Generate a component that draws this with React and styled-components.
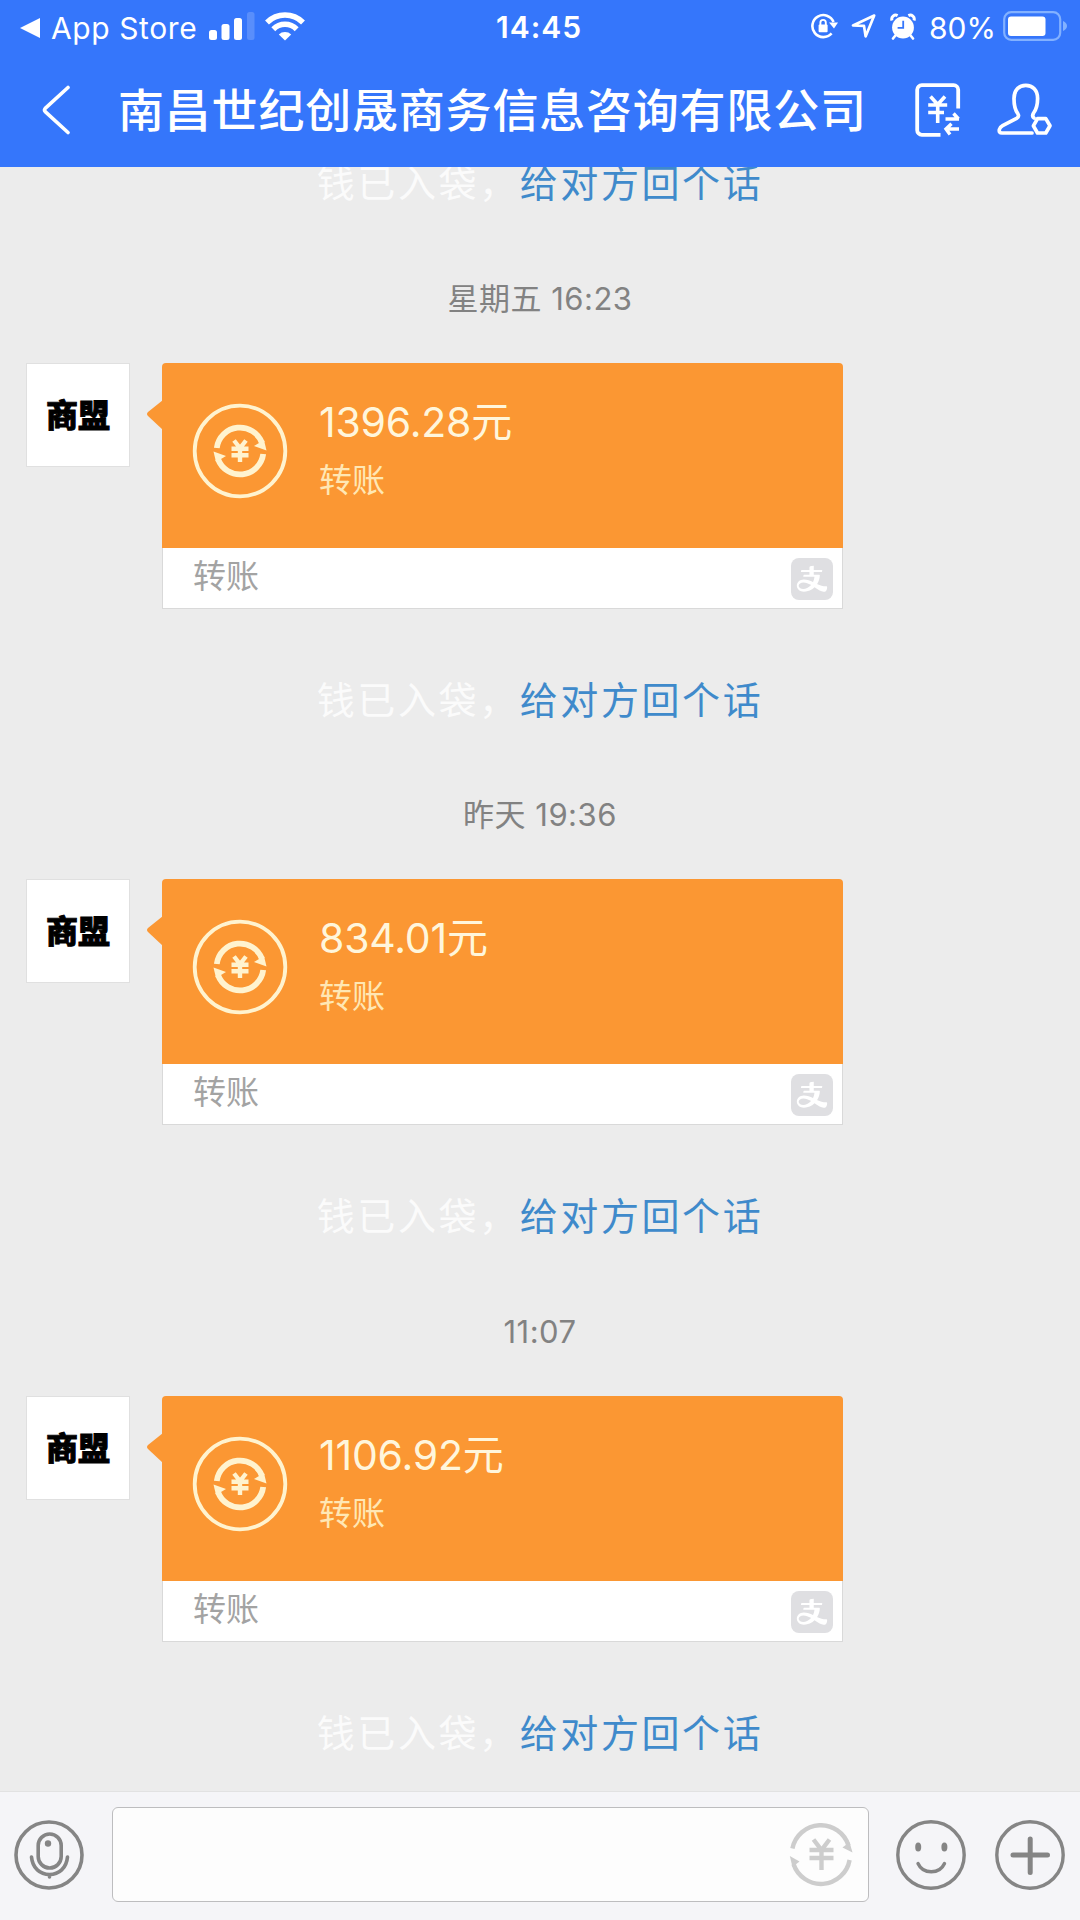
import React from 'react';
import styled, { createGlobalStyle } from 'styled-components';
import { AiFillAlipaySquare } from 'react-icons/ai';

const messages = [
  { id: 1, time: '星期五 16:23', amount: '1396.28元' },
  { id: 2, time: '昨天 19:36', amount: '834.01元' },
  { id: 3, time: '11:07', amount: '1106.92元' },
];

const SignalIcon = () => (
  <svg width="46" height="30" viewBox="0 0 46 30" fill="#fff">
    <rect x="0" y="19" width="8" height="10" rx="2.5" />
    <rect x="12.5" y="13" width="8" height="16" rx="2.5" />
    <rect x="25" y="7" width="8" height="22" rx="2.5" />
    <rect x="38" y="1" width="7.5" height="28" rx="2.5" opacity="0.18" />
  </svg>
);

const WifiIcon = () => (
  <svg width="40" height="30" viewBox="0 0 40 30" fill="none" stroke="#fff" strokeWidth="5.5">
    <path d="M2 11.5 A25.5 25.5 0 0 1 38 11.5" />
    <path d="M8.3 18.2 A16.5 16.5 0 0 1 31.7 18.2" />
    <path d="M13.8 23.4 A9 9 0 0 1 26.2 23.4 L20 29.5 Z" fill="#fff" stroke="none" />
  </svg>
);

const RotationLockIcon = () => (
  <svg width="28" height="26" viewBox="0 0 28 26" fill="none" stroke="#fff" strokeWidth="2.6">
    <path d="M23.6 9 A11 11 0 1 0 21.6 20.4" />
    <path d="M19 9.6 H28 L24 15.5 Z" fill="#fff" stroke="none" />
    <rect x="8.6" y="11.6" width="9" height="7.6" rx="1" fill="#fff" stroke="none" />
    <path d="M10.4 12 V9.6 A2.7 2.7 0 0 1 15.8 9.6 V12" strokeWidth="1.9" />
  </svg>
);

const LocationIcon = () => (
  <svg width="26" height="26" viewBox="0 0 26 26" fill="none" stroke="#fff" strokeWidth="2.7" strokeLinejoin="round">
    <path d="M23.2 2.6 L2 12.4 L13 12.9 L14.6 23.4 Z" />
  </svg>
);

const AlarmIcon = () => (
  <svg width="26" height="27" viewBox="0 0 26 27" fill="none">
    <circle cx="13" cy="14.5" r="10.9" fill="#fff" />
    <path d="M2 7.5 A4 4 0 0 1 7.6 2.6 M18.4 2.6 A4 4 0 0 1 24 7.5" stroke="#fff" strokeWidth="3" />
    <path d="M5.4 22.5 L3 25.5 M20.6 22.5 L23 25.5" stroke="#fff" strokeWidth="2.6" strokeLinecap="round" />
    <path d="M13.2 7.8 V14.8 H7.6" stroke="#3576fb" strokeWidth="1.8" />
  </svg>
);

const BatteryIcon = () => (
  <svg width="65" height="30" viewBox="0 0 65 30">
    <rect x="1.2" y="1.2" width="56" height="27.6" rx="7" fill="none" stroke="#82b1ff" strokeWidth="2.2" />
    <rect x="5" y="5.5" width="37.5" height="19.5" rx="3" fill="#fff" />
    <path d="M60 10 Q64 12 64 15 Q64 18 60 20 Z" fill="#82b1ff" />
  </svg>
);

const BackIcon = () => (
  <svg width="30" height="50" viewBox="0 0 30 50" fill="none" stroke="#fff" strokeWidth="3.6" strokeLinecap="round" strokeLinejoin="round">
    <path d="M26 2.5 L3.2 23.4 Q1.8 25 3.2 26.6 L26 47.5" />
  </svg>
);

const BillIcon = () => (
  <svg width="46" height="54" viewBox="0 0 46 54" fill="none" stroke="#fff" strokeWidth="3.8">
    <path d="M43.2 25.5 V6.8 A4.6 4.6 0 0 0 38.6 2.2 H6.8 A4.6 4.6 0 0 0 2.2 6.8 V47.2 A4.6 4.6 0 0 0 6.8 51.8 H25.5" />
    <path d="M15.5 13.5 L22.7 21.5 L30 13.5 M13.2 22 H32.2 M13.2 29.5 H29 M22.7 21.5 V40" strokeWidth="3.6" />
    <path d="M30.5 36 H44 M38.5 30.5 L43.5 36 M44 46 H31 M36.5 40.8 L31 46 L35 51.5" strokeWidth="3.4" />
  </svg>
);

const ProfileIcon = () => (
  <svg width="56" height="54" viewBox="0 0 56 54" fill="none" stroke="#fff" strokeWidth="3.7" strokeLinejoin="round">
    <path d="M35 50 H5 Q1.6 50 2.4 46.4 Q3 44 5.6 42.6 L19.6 35.4 Q22.6 33.6 20.8 30.6 C18 27 17 22 17 15.5 C17 7.2 22 2.4 28.8 2.4 C35.6 2.4 40.6 7.2 40.6 15.5 C40.6 22 39.6 26 36.6 30 Q34.6 33.4 37 35" strokeLinecap="round" />
    <path d="M41.5 36.2 H49.8 L54 43.4 L49.8 50.6 H41.5 L37.4 43.4 Z" transform="translate(-1 -0.6)" />
  </svg>
);

const TransferIcon = () => (
  <svg width="96" height="96" viewBox="0 0 96 96" fill="none" stroke="#fff3cf">
    <circle cx="48" cy="48" r="45.3" strokeWidth="3.8" />
    <path d="M24.8 45 A23.4 23.4 0 0 1 70 40" strokeWidth="5.8" />
    <path d="M62 43 L72 37 L74.5 47.5 Z" fill="#fff3cf" stroke="none" />
    <path d="M71.2 51 A23.4 23.4 0 0 1 26 56" strokeWidth="5.8" />
    <path d="M34 53 L24 59 L21.5 48.5 Z" fill="#fff3cf" stroke="none" />
    <path d="M42 37.5 L48 45 L54 37.5 M39.5 45.8 H56.5 M39.5 52.3 H56.5 M48 45 V59" strokeWidth="4.4" />
  </svg>
);

const InputYenIcon = () => (
  <svg width="64" height="64" viewBox="0 0 64 64" fill="none" stroke="#cdcdcd">
    <path d="M3.4 25.5 A29 29 0 0 1 59.5 22.5" strokeWidth="4.4" />
    <path d="M53.5 24.5 L60.5 19 L63.5 29.5 Z" fill="#cdcdcd" stroke="none" />
    <path d="M60.6 37 A29 29 0 0 1 4.5 41" strokeWidth="4.4" />
    <path d="M10.5 38.5 L3.5 44 L0.8 33 Z" fill="#cdcdcd" stroke="none" />
    <path d="M24.5 16.5 L32.5 27 L40.5 16.5 M20.5 27 H44.5 M20.5 35 H44.5 M32.5 27 V47" strokeWidth="4.4" />
  </svg>
);

const MicIcon = () => (
  <svg width="72" height="72" viewBox="0 0 72 72" fill="none" stroke="#858585" strokeWidth="3.6" strokeLinecap="round">
    <circle cx="36" cy="36" r="33" />
    <rect x="25.2" y="15" width="23" height="34" rx="11.5" />
    <path d="M18.5 38 C19.5 49 27 55.5 36.5 55.5 C46 55.5 53.5 49 54.5 38 M36.5 55.5 V58" />
    <circle cx="35" cy="24.5" r="3.2" fill="#858585" stroke="none" />
  </svg>
);

const SmileIcon = () => (
  <svg width="72" height="72" viewBox="0 0 72 72" fill="none" stroke="#858585" strokeWidth="3.4" strokeLinecap="round">
    <circle cx="36" cy="36" r="33.2" />
    <ellipse cx="23.2" cy="28" rx="3" ry="4.6" fill="#858585" stroke="none" />
    <ellipse cx="49.4" cy="28" rx="3" ry="4.6" fill="#858585" stroke="none" />
    <path d="M23 44.5 C28 55.5 44.5 55.5 49.5 44.5" />
  </svg>
);

const PlusIcon = () => (
  <svg width="72" height="72" viewBox="0 0 72 72" fill="none" stroke="#858585" strokeWidth="3.4" strokeLinecap="round">
    <circle cx="36" cy="36" r="33.2" />
    <path d="M19 36 H53.5 M36.2 20 V53.5" strokeWidth="5" />
  </svg>
);

const Tip = () => (
  <TipLine>
    钱已入袋，<TipLink>给对方回个话</TipLink>
  </TipLine>
);

const Message = ({ time, amount }) => (
  <>
    <Time>{time}</Time>
    <MessageRow>
      <Avatar>商盟</Avatar>
      <Card>
        <CardTop>
          <Tail width="17" height="30" viewBox="0 0 17 30">
            <path d="M17 0 L2 12 Q0 14 2 16 L17 30 Z" fill="#fb9733" />
          </Tail>
          <TransferIcon />
          <CardText>
            <Amount>{amount}</Amount>
            <Kind>转账</Kind>
          </CardText>
        </CardTop>
        <CardFooter>
          <span>转账</span>
          <PayLogo>
            <AiFillAlipaySquare size={54} color="#dfdfe2" />
          </PayLogo>
        </CardFooter>
      </Card>
    </MessageRow>
    <Tip />
  </>
);

const App = () => {
  return (
    <Screen>
      <GlobalStyle />
      <Header>
        <StatusBar>
          <StatusLeft>
            <BackTriangle />
            <StatusText>App Store</StatusText>
            <SignalIcon />
            <WifiIcon />
          </StatusLeft>
          <Clock>14:45</Clock>
          <StatusRight>
            <RotationLockIcon />
            <LocationIcon />
            <AlarmIcon />
            <Percent>80%</Percent>
            <BatteryIcon />
          </StatusRight>
        </StatusBar>
        <NavBar>
          <BackIcon />
          <Title>南昌世纪创晟商务信息咨询有限公司</Title>
          <BillIcon />
          <ProfileIcon />
        </NavBar>
      </Header>
      <MessageList>
        <Tip />
        {messages.map((m) => (
          <Message key={m.id} time={m.time} amount={m.amount} />
        ))}
      </MessageList>
      <InputBar>
        <MicIcon />
        <InputBox>
          <InputYenIcon />
        </InputBox>
        <SmileIcon />
        <PlusIcon />
      </InputBar>
    </Screen>
  );
};

export default App;

const GlobalStyle = createGlobalStyle`
  * {
    box-sizing: border-box;
  }
  body {
    margin: 0;
    font-family: Inter, 'Noto Sans CJK SC', sans-serif;
  }
  svg {
    display: block;
    flex-shrink: 0;
  }
`;

const Screen = styled.div`
  width: 1080px;
  height: 1920px;
  display: flex;
  flex-direction: column;
  overflow: hidden;
  background: #ececec;
`;

const Header = styled.header`
  height: 167px;
  flex-shrink: 0;
  background: #3576fb;
  color: #fff;
`;

const StatusBar = styled.div`
  height: 55px;
  padding: 0 12px 0 20px;
  display: grid;
  grid-template-columns: 476px 86px 1fr;
`;

const StatusLeft = styled.div`
  height: 52px;
  display: flex;
  align-items: center;

  svg + svg {
    margin-left: 10px;
  }
`;

const BackTriangle = styled.span`
  border: 10px solid transparent;
  border-left: 0;
  border-right: 20px solid #fff;
  margin-top: 3px;
`;

const StatusText = styled.span`
  padding-left: 11px;
  margin-top: 3px;
  font-size: 30px;
  letter-spacing: 0.6px;
  white-space: nowrap;
  flex: 0 0 169px;
`;

const Clock = styled.div`
  font-size: 30px;
  font-weight: 600;
  line-height: 55px;
  letter-spacing: 1px;
`;

const StatusRight = styled.div`
  height: 52px;
  display: flex;
  align-items: center;
  justify-content: flex-end;
  gap: 13px;
`;

const Percent = styled.span`
  width: 69px;
  margin-top: 3px;
  margin-right: -8px;
  font-size: 30px;
  white-space: nowrap;
`;

const NavBar = styled.div`
  height: 110px;
  padding: 0 0 0 42px;
  display: flex;
  align-items: center;
`;

const Title = styled.h1`
  width: 843px;
  margin: 0;
  padding-left: 46px;
  font-size: 46px;
  font-weight: 500;
  letter-spacing: 0.8px;
  line-height: 60px;
  white-space: nowrap;
  flex-shrink: 0;

  & + svg {
    margin-right: 36px;
  }
`;

const MessageList = styled.main`
  flex: 1;
  min-height: 0;
  padding-bottom: 28px;
  display: flex;
  flex-direction: column;
  justify-content: flex-end;
  overflow: hidden;
`;

const TipLine = styled.p`
  margin: 0;
  flex-shrink: 0;
  font-size: 38px;
  line-height: 60px;
  letter-spacing: 2.6px;
  text-align: center;
  color: #fbfbfb;
`;

const TipLink = styled.span`
  color: #3f8acb;
`;

const Time = styled.div`
  margin-top: 65.6px;
  flex-shrink: 0;
  font-size: 31px;
  line-height: 40px;
  letter-spacing: 0.5px;
  text-align: center;
  color: #828282;
`;

const MessageRow = styled.div`
  margin: 44px 0 61px;
  padding-left: 26px;
  flex-shrink: 0;
  display: flex;
  align-items: flex-start;
`;

const Avatar = styled.div`
  width: 104px;
  height: 104px;
  margin-right: 32px;
  border: 1px solid #e0e0e0;
  background: #fff;
  color: #000;
  font-size: 32px;
  font-weight: 900;
  line-height: 103px;
  text-align: center;
  -webkit-text-stroke: 0.9px #000;
`;

const Card = styled.div`
  width: 681px;
  height: 246px;
`;

const CardTop = styled.div`
  position: relative;
  height: 185px;
  padding: 40px 30px 0;
  display: flex;
  align-items: flex-start;
  border-radius: 4px 4px 0 0;
  background: #fb9733;
`;

const Tail = styled.svg`
  position: absolute;
  left: -16px;
  top: 37px;
`;

const CardText = styled.div`
  padding-left: 31px;
`;

const Amount = styled.div`
  margin-top: -6px;
  font-size: 41px;
  line-height: 50px;
  letter-spacing: -0.2px;
  color: #fff6dc;
`;

const Kind = styled.div`
  margin-top: 11px;
  font-size: 33px;
  line-height: 44px;
  color: #ffe7b4;
`;

const CardFooter = styled.div`
  height: 61px;
  padding: 0 9px 8px 30px;
  display: flex;
  align-items: center;
  justify-content: space-between;
  border: 1px solid #d9d9d9;
  border-top: 0;
  background: #fff;
  font-size: 33px;
  color: #a3a3a3;
`;

const PayLogo = styled.div`
  width: 42px;
  height: 42px;
  margin-top: 10px;
  display: flex;
  align-items: center;
  justify-content: center;
  flex-shrink: 0;
  border-radius: 8px;
  overflow: hidden;
`;

const InputBar = styled.footer`
  height: 129px;
  padding: 0 14px 3px 13px;
  flex-shrink: 0;
  display: flex;
  align-items: center;
  border-top: 1px solid #e2e2e2;
  background: #f5f5f8;

  & > svg:last-child {
    margin-left: 27px;
  }
`;

const InputBox = styled.div`
  width: 757px;
  height: 95px;
  margin: 0 26px 0 27px;
  padding-right: 15px;
  display: flex;
  align-items: center;
  justify-content: flex-end;
  border: 1px solid #bdbdbf;
  border-radius: 6px;
  background: #fdfdfd;
`;
